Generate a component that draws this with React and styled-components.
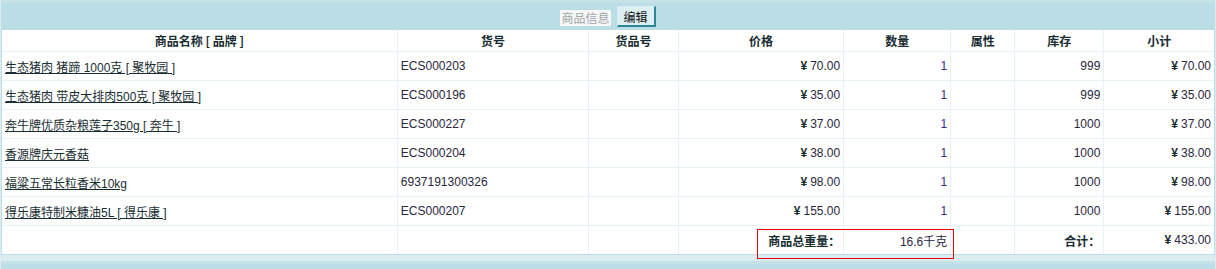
import React from 'react'
import styled, { createGlobalStyle } from 'styled-components'

const GlobalStyle = createGlobalStyle`
  html, body {
    margin: 0;
    padding: 0;
    background: #dcedf1;
  }
  body {
    padding: 0 1px;
    font-family: 'Liberation Sans', 'Noto Sans CJK SC', sans-serif;
    font-size: 12px;
    color: #192e32;
  }
`

const Section = styled.div`
  position: relative;
  border: 1px solid #bbdde5;
  border-top: 3px solid #c6e2e9;
  background: #fff;
  margin-bottom: 6px;
`

const TitleBar = styled.div`
  display: flex;
  align-items: center;
  justify-content: center;
  gap: 6px;
  height: 27px;
  background: #bbdde5;
`

const TitleLabel = styled.span`
  display: inline-block;
  padding: 0 1px;
  height: 16px;
  line-height: 16px;
  margin-top: 2px;
  background: #f6f8f8;
  color: #a0a4a5;
  font-size: 12px;
  font-family: 'Noto Sans CJK SC', sans-serif;
`

const EditButton = styled.button`
  height: 21px;
  padding: 0 6px;
  border: 1px solid #d6ecf1;
  border-right: 2px solid #2e8497;
  border-bottom: 2px solid #2e8497;
  background: #deeff4;
  color: #111;
  font-family: 'Noto Sans CJK SC', sans-serif;
  font-size: 12px;
  line-height: 17px;
`

const Table = styled.table`
  width: 100%;
  table-layout: fixed;
  border-collapse: collapse;
  border-style: hidden;
`

const Th = styled.th`
  height: 21px;
  padding: 0 4px;
  border: 1px solid #e6f2f5;
  font-family: 'Noto Sans CJK SC', sans-serif;
  font-weight: bold;
  font-size: 12px;
  color: #192e32;
  text-align: center;
`

const Td = styled.td`
  height: 28px;
  padding: 0 3px;
  border: 1px solid #e6f2f5;
  text-align: ${(p) => p.$align || 'left'};
  color: ${(p) => p.$color || '#2a2740'};
  white-space: nowrap;
`

const GoodsLink = styled.a`
  color: #192e32;
  text-decoration: underline;
  cursor: pointer;
`

const Yen = styled.b`
  color: #192e32;
  margin-right: 3px;
`

const Label = styled.span`
  font-family: 'Noto Sans CJK SC', sans-serif;
  font-weight: bold;
  color: #192e32;
  font-size: 12px;
`

const Highlight = styled.div`
  position: absolute;
  left: 755px;
  top: 226px;
  width: 195px;
  height: 28px;
  border: 1px solid #e60000;
  pointer-events: none;
`

const widths = [395, 191, 90, 165, 107, 64, 89, 110]

const goods = [
  { name: '生态猪肉 猪蹄 1000克 [ 聚牧园 ]', sn: 'ECS000203', price: '70.00', stock: '999', sub: '70.00' },
  { name: '生态猪肉 带皮大排肉500克 [ 聚牧园 ]', sn: 'ECS000196', price: '35.00', stock: '999', sub: '35.00' },
  { name: '奔牛牌优质杂粮莲子350g [ 奔牛 ]', sn: 'ECS000227', price: '37.00', stock: '1000', sub: '37.00' },
  { name: '香源牌庆元香菇', sn: 'ECS000204', price: '38.00', stock: '1000', sub: '38.00' },
  { name: '福粱五常长粒香米10kg', sn: '6937191300326', price: '98.00', stock: '1000', sub: '98.00' },
  { name: '得乐康特制米糠油5L [ 得乐康 ]', sn: 'ECS000207', price: '155.00', stock: '1000', sub: '155.00' },
]

const Money = ({ value }) => (
  <>
    <Yen>¥</Yen>
    {value}
  </>
)

export default function App() {
  return (
    <>
      <GlobalStyle />
      <Section>
        <TitleBar>
          <TitleLabel>商品信息</TitleLabel>
          <EditButton>编辑</EditButton>
        </TitleBar>
        <Table>
          <colgroup>
            {widths.map((w, i) => (
              <col key={i} style={{ width: w }} />
            ))}
          </colgroup>
          <thead>
            <tr>
              <Th>商品名称 [ 品牌 ]</Th>
              <Th>货号</Th>
              <Th>货品号</Th>
              <Th>价格</Th>
              <Th>数量</Th>
              <Th>属性</Th>
              <Th>库存</Th>
              <Th>小计</Th>
            </tr>
          </thead>
          <tbody>
            {goods.map((g) => (
              <tr key={g.sn}>
                <Td>
                  <GoodsLink>{g.name}</GoodsLink>
                </Td>
                <Td>{g.sn}</Td>
                <Td />
                <Td $align="right">
                  <Money value={g.price} />
                </Td>
                <Td $align="right" $color="#3b2f86">1</Td>
                <Td />
                <Td $align="right">{g.stock}</Td>
                <Td $align="right">
                  <Money value={g.sub} />
                </Td>
              </tr>
            ))}
            <tr>
              <Td />
              <Td />
              <Td />
              <Td $align="right">
                <Label>商品总重量：</Label>
              </Td>
              <Td $align="right">16.6千克</Td>
              <Td />
              <Td $align="right">
                <Label>合计：</Label>
              </Td>
              <Td $align="right">
                <Money value="433.00" />
              </Td>
            </tr>
          </tbody>
        </Table>
        <Highlight />
      </Section>
      <Section>
        <TitleBar />
      </Section>
    </>
  )
}
